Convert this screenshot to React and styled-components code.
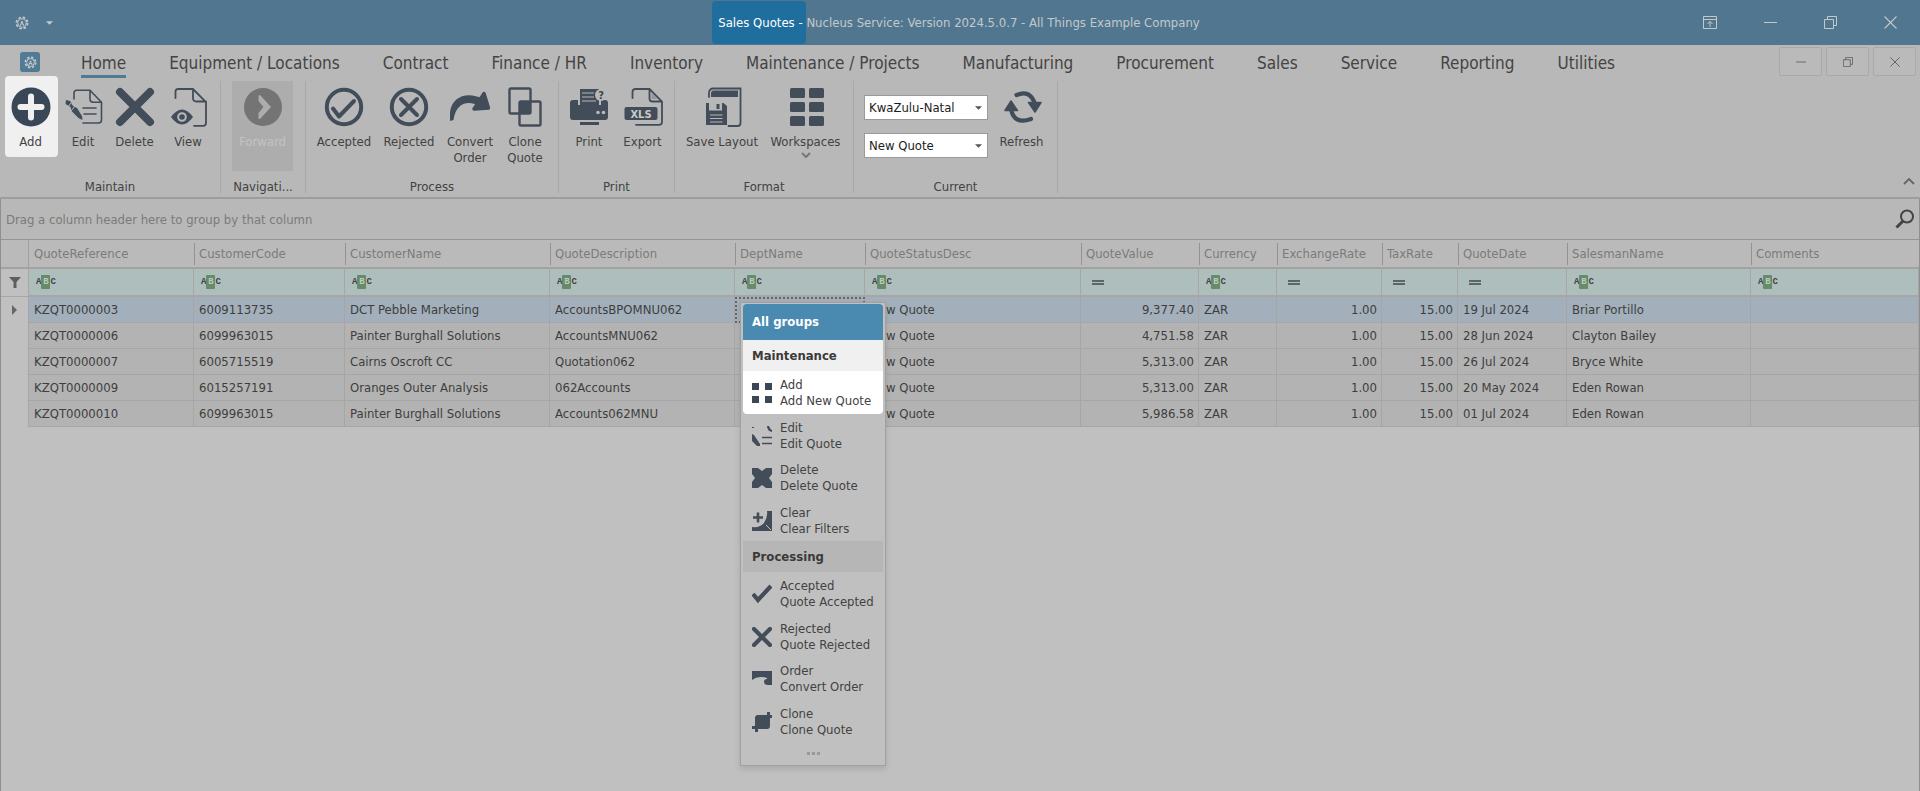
import React, { useState } from 'react';
import styled, { createGlobalStyle, css } from 'styled-components';

const ink = '#434d59';

/* ---------- data ---------- */

const tabs = [
  'Home', 'Equipment / Locations', 'Contract', 'Finance / HR', 'Inventory', 'Maintenance / Projects',
  'Manufacturing', 'Procurement', 'Sales', 'Service', 'Reporting', 'Utilities',
];

const columns = [
  { key: 'ref', label: 'QuoteReference', width: 165 },
  { key: 'code', label: 'CustomerCode', width: 151 },
  { key: 'name', label: 'CustomerName', width: 205 },
  { key: 'desc', label: 'QuoteDescription', width: 185 },
  { key: 'dept', label: 'DeptName', width: 130 },
  { key: 'status', label: 'QuoteStatusDesc', width: 216 },
  { key: 'value', label: 'QuoteValue', width: 118, numeric: true },
  { key: 'currency', label: 'Currency', width: 78 },
  { key: 'rate', label: 'ExchangeRate', width: 105, numeric: true },
  { key: 'tax', label: 'TaxRate', width: 76, numeric: true },
  { key: 'date', label: 'QuoteDate', width: 109, equals: true },
  { key: 'salesman', label: 'SalesmanName', width: 184 },
  { key: 'comments', label: 'Comments' },
];

const base = { dept: '', status: 'New Quote', currency: 'ZAR', rate: '1.00', tax: '15.00', comments: '' };

const quotes = [
  { ...base, ref: 'KZQT0000003', code: '6009113735', name: 'DCT Pebble Marketing', desc: 'AccountsBPOMNU062', value: '9,377.40', date: '19 Jul 2024', salesman: 'Briar Portillo' },
  { ...base, ref: 'KZQT0000006', code: '6099963015', name: 'Painter Burghall Solutions', desc: 'AccountsMNU062', value: '4,751.58', date: '28 Jun 2024', salesman: 'Clayton Bailey' },
  { ...base, ref: 'KZQT0000007', code: '6005715519', name: 'Cairns Oscroft CC', desc: 'Quotation062', value: '5,313.00', date: '26 Jul 2024', salesman: 'Bryce White' },
  { ...base, ref: 'KZQT0000009', code: '6015257191', name: 'Oranges Outer Analysis', desc: '062Accounts', value: '5,313.00', date: '20 May 2024', salesman: 'Eden Rowan' },
  { ...base, ref: 'KZQT0000010', code: '6099963015', name: 'Painter Burghall Solutions', desc: 'Accounts062MNU', value: '5,986.58', date: '01 Jul 2024', salesman: 'Eden Rowan' },
];

/* ---------- icons ---------- */

const Gear = ({ size }) => (
  <svg width={size} height={size} viewBox="0 0 16 16" fill="none" stroke="currentColor">
    <circle cx="8" cy="8" r="6.4" strokeWidth="2" strokeDasharray="2.9 2.13" />
    <circle cx="8" cy="8" r="4.8" strokeWidth="1.2" />
    <circle cx="8" cy="7" r="1.2" fill="currentColor" stroke="none" />
    <path d="M6 11c0-3 4-3 4 0" strokeWidth="1.3" />
  </svg>
);

const Caret = () => (
  <svg width="7" height="4" viewBox="0 0 8 4"><path d="M0 0h8L4 4z" fill="currentColor" /></svg>
);

const Minus = ({ size = 13 }) => (
  <svg width={size} height={size} viewBox="0 0 13 13"><path d="M0 6.5h13" stroke="currentColor" /></svg>
);

const Restore = ({ size = 13 }) => (
  <svg width={size} height={size} viewBox="0 0 13 13" fill="none" stroke="currentColor">
    <path d="M.5 3.5h9v9h-9zM3.5 3.5v-3h9v9h-3" />
  </svg>
);

const Close = ({ size = 13 }) => (
  <svg width={size} height={size} viewBox="0 0 13 13"><path d="M.5.5l12 12m0-12l-12 12" stroke="currentColor" strokeWidth="1.1" /></svg>
);

const RibbonMode = () => (
  <svg width="14" height="13" viewBox="0 0 14 13" fill="none" stroke="currentColor">
    <path d="M.5.5h13v12H.5zM.5 3.5h13M7 11V5.500M4.500 8L7 5.500 9.500 8" />
  </svg>
);

const big = {
  add: (
    <>
      <circle cx="20" cy="20" r="19.500" fill="#3a4757" />
      <path d="M20 9.500v21M9.500 20h21" stroke="#f0f0f0" strokeWidth="6" strokeLinecap="round" />
    </>
  ),
  edit: (
    <>
      <g fill="none" stroke={ink} strokeWidth="1.600" strokeLinecap="round">
        <path d="M11 12V6q0-2.800 2.800-2.800H27l11.500 12V33q0 3-3 3H20M27 3.500V12q0 3.200 3.200 3.200h8M20 21h13M21 27h12" />
      </g>
      <path d="M3 13l4 1 3 5 4 2 5 8 .5 4-4-2-7-7-1-4-5-3z" fill={ink} />
      <path d="M8 16l-3 4M12 19l-4 5" stroke="#b8b8b8" />
    </>
  ),
  remove: <path d="M5 5l30 30M35 5L5 35" stroke={ink} strokeWidth="8" strokeLinecap="round" />,
  view: (
    <>
      <g fill="none" stroke={ink} strokeWidth="1.800" strokeLinecap="round">
        <path d="M7.500 11V4.500Q7.500 2 10 2H25l13 13v21q0 2.800-3 2.800h-9M25 2v9q0 3.500 3.500 3.500H38" />
      </g>
      <path d="M3 30q11-15 22 0-11 15-22 0z" fill={ink} />
      <circle cx="14" cy="30" r="3.800" fill="none" stroke="#b8b8b8" strokeWidth="2" />
    </>
  ),
  forward: (
    <>
      <circle cx="20" cy="20" r="19" fill="#747474" />
      <path d="M16 8.500v5.500l5 6-5 6v5.500h1L27.500 20 17 8.500z" fill="#adadad" stroke="#adadad" strokeLinejoin="round" />
    </>
  ),
  accepted: (
    <g fill="none" stroke={ink} strokeLinecap="round" strokeLinejoin="round">
      <circle cx="20" cy="20" r="17.200" strokeWidth="4" />
      <path d="M9 21.500l6 8L30 14" strokeWidth="4" />
    </g>
  ),
  rejected: (
    <g fill="none" stroke={ink} strokeLinecap="round">
      <circle cx="20" cy="20" r="17.200" strokeWidth="4" />
      <path d="M12 12l16 16M28 12L12 28" strokeWidth="4" />
    </g>
  ),
  convert: (
    <>
      <path d="M0 34V25C2 9 18 4 33 12l-2 8C18 12 6 16 3.500 33z" fill={ink} />
      <path d="M34 6.500L38.500 21 24 22z" fill={ink} stroke={ink} strokeWidth="3.500" strokeLinejoin="round" />
    </>
  ),
  clone: (
    <>
      <g fill="none" stroke={ink} strokeWidth="2.400">
        <rect x="4.500" y="1.500" width="21" height="25" rx="1.500" />
        <rect x="14.500" y="14.500" width="21" height="24" rx="1.500" />
      </g>
      <rect x="14.500" y="14.500" width="11" height="12" fill={ink} />
    </>
  ),
  print: (
    <>
      <path d="M11 2h19v16H11z" fill={ink} />
      <path d="M13 6h12M13 10h12M13 14h14" stroke="#b8b8b8" strokeWidth="1.200" />
      <path d="M4 13h5v5h23v-5h4q3 0 3 3v14q0 3-3 3H4q-3 0-3-3V16q0-3 3-3z" fill={ink} />
      <path d="M11 35h19v3H11z" fill={ink} />
      <g fill="#b8b8b8">
        <circle cx="29" cy="25.500" r="1.800" />
        <circle cx="34.500" cy="25.500" r="1.800" />
        <circle cx="32" cy="8" r="6" />
      </g>
      <text x="32" y="12" textAnchor="middle" fontSize="11" fontWeight="700" fill="#444">?</text>
    </>
  ),
  xls: (
    <>
      <g fill="none" stroke={ink} strokeWidth="1.800" strokeLinecap="round">
        <path d="M9.500 11V5q0-3 3-3h14L39 14.500V35q0 2.800-3 2.800H13M26.500 2v9.500q0 3 3 3H39" />
      </g>
      <path d="M28.500 6v6h6z" fill={ink} opacity=".3" />
      <rect x="1.500" y="20" width="33" height="13" rx="2" fill={ink} />
      <text x="18" y="30.500" textAnchor="middle" fontSize="11" fontWeight="700" fill="#c8c8c8">XLS</text>
    </>
  ),
  save: (
    <>
      <path d="M7 10V6q0-4.500 4.500-4.500h27V36q0 3-3 3h-9" fill="none" stroke={ink} strokeWidth="1.800" strokeLinecap="round" />
      <path d="M11 3.500h25V10H9V6q0-2 2-2.500z" fill={ink} />
      <path d="M4 16h3v7.500h13V16h1.500l3.500 3v19H4zM14.500 17h3v5h-3z" fill={ink} />
      <path d="M8 28h12.500M8 31.500h12.500M8 35h12.500" stroke="#b8b8b8" strokeWidth="1.200" />
    </>
  ),
  workspaces: (
    <g fill={ink}>
      {[1, 15, 29].map(y => (
        <React.Fragment key={y}>
          <rect x="4" y={y} width="15" height="10" rx="1.500" />
          <rect x="23" y={y} width="15" height="10" rx="1.500" />
        </React.Fragment>
      ))}
    </g>
  ),
  refresh: (
    <>
      <g fill="none" stroke={ink} strokeWidth="4.200" strokeLinecap="round">
        <path d="M14.500 8Q28 2 33 17" />
        <path d="M29 32Q12 38 9 22" />
      </g>
      <path d="M26.500 15.500h12.500L33 25zM3 23.500h12.500L9 14z" fill={ink} stroke={ink} strokeWidth="1.500" strokeLinejoin="round" />
    </>
  ),
};

const small = {
  add: <path d="M0 0h7v7H0zM13 0h7v7h-7zM0 13h7v7H0zM13 13h7v7h-7z" fill="#3a4757" />,
  edit: (
    <>
      <path d="M10 11.500h10M10 17.500h10" stroke={ink} strokeWidth="1.500" />
      <path d="M0 8l2 1 6 9v2H5l-5-5zM15 0h2q1 3 3 4v2q-5-1-5-6zM0 1h2v1H0z" fill={ink} />
    </>
  ),
  remove: <path d="M0 0h6l4 3 4-3h6v6l-3 4 3 4v6h-6l-4-3-4 3H0v-6l3-4-3-4z" fill={ink} />,
  clear: (
    <>
      <path d="M1 6.500h10M6 1.500v10" stroke={ink} strokeWidth="2.600" />
      <path d="M15 0h5v20H0v-4q8 1 12-4 4-6 3-12z" fill={ink} />
      <path d="M14 14l5 5" stroke="#c0c0c0" strokeWidth="1" />
    </>
  ),
  accepted: <path d="M1 10l5 6L19 2" fill="none" stroke={ink} strokeWidth="4.200" />,
  rejected: <path d="M2 2l16 16M18 2L2 18" stroke={ink} strokeWidth="4.200" strokeLinecap="round" />,
  convert: <path d="M0 2h20v14h-4q-4 0-4-3.500 0-2.500 3-2.500V9Q6 6 0 11z" fill={ink} />,
  clone: <path d="M3 6q0-3 3-3h9V0h3v3h2v3h-2v8q0 3-3 3H6v3H3v-3H0v-3h3z" fill={ink} />,
};

const BigIcon = ({ name }) => <svg width="40" height="40" viewBox="0 0 40 40">{big[name]}</svg>;
const SmallIcon = ({ name }) => <svg width="20" height="20" viewBox="0 0 20 20">{small[name]}</svg>;

/* ---------- pieces ---------- */

const Tool = ({ icon, width, lit, disabled, dropdown, children }) => (
  <ToolButton type="button" $width={width} $lit={lit} disabled={disabled}>
    <BigIcon name={icon} />
    <span>{children}</span>
    {dropdown && (
      <svg width="10" height="6" viewBox="0 0 10 6"><path d="M1 1l4 4 4-4" fill="none" stroke="#777" strokeWidth="2" /></svg>
    )}
  </ToolButton>
);

const Group = ({ title, left, right, children }) => (
  <RibbonGroup aria-label={title}>
    <Tools $left={left} $right={right}>{children}</Tools>
    <Caption>{title}</Caption>
  </RibbonGroup>
);

const Combo = ({ label, value }) => (
  <ComboBox>
    <select aria-label={label} defaultValue={value}>
      <option>{value}</option>
    </select>
    <Caret />
  </ComboBox>
);

const Command = ({ icon, title, text, lit }) => (
  <MenuItem type="button" role="menuitem" $lit={lit}>
    <SmallIcon name={icon} />
    <span>{title}<br />{text}</span>
  </MenuItem>
);

const App = () => {
  const [tab, setTab] = useState('Home');
  const [selected, setSelected] = useState(0);

  return (
    <Window>
      <GlobalStyle />
      <TitleBar>
        <QuickAccess>
          <TitleButton type="button" $width={36} aria-label="Application"><Gear size={14} /></TitleButton>
          <TitleButton type="button" $width={18} aria-label="Customize quick access"><Caret /></TitleButton>
        </QuickAccess>
        <Title>
          <TitleMark>Sales Quotes -&nbsp;</TitleMark>
          Nucleus Service: Version 2024.5.0.7 - All Things Example Company
        </Title>
        <WindowButtons>
          <TitleButton type="button" $width={60} aria-label="Ribbon display"><RibbonMode /></TitleButton>
          <TitleButton type="button" $width={60} aria-label="Minimize"><Minus /></TitleButton>
          <TitleButton type="button" $width={60} aria-label="Restore"><Restore /></TitleButton>
          <TitleButton type="button" $width={60} aria-label="Close"><Close /></TitleButton>
        </WindowButtons>
      </TitleBar>

      <TabBar>
        <AppButton type="button" aria-label="File menu"><Gear size={13} /></AppButton>
        <Tabs>
          {tabs.map(name => (
            <Tab key={name} href="#" $active={name === tab} onClick={() => setTab(name)}>{name}</Tab>
          ))}
        </Tabs>
        <ChildButtons>
          <ChildButton type="button" aria-label="Minimize window"><Minus size={10} /></ChildButton>
          <ChildButton type="button" aria-label="Restore window"><Restore size={10} /></ChildButton>
          <ChildButton type="button" aria-label="Close window"><Close size={10} /></ChildButton>
        </ChildButtons>
      </TabBar>

      <Ribbon>
        <Group title="Maintain" left={5} right={5}>
          <Tool icon="add" width={53} lit>Add</Tool>
          <Tool icon="edit" width={50}>Edit</Tool>
          <Tool icon="remove" width={53}>Delete</Tool>
          <Tool icon="view" width={54}>View</Tool>
        </Group>
        <Group title="Navigati..." left={11} right={12}>
          <Tool icon="forward" width={61} disabled>Forward</Tool>
        </Group>
        <Group title="Process" left={5} right={7}>
          <Tool icon="accepted" width={66}>Accepted</Tool>
          <Tool icon="rejected" width={64}>Rejected</Tool>
          <Tool icon="convert" width={58}>Convert Order</Tool>
          <Tool icon="clone" width={52}>Clone Quote</Tool>
        </Group>
        <Group title="Print" left={3} right={5}>
          <Tool icon="print" width={54}>Print</Tool>
          <Tool icon="xls" width={53}>Export</Tool>
        </Group>
        <Group title="Format" left={4} right={7}>
          <Tool icon="save" width={86}>Save Layout</Tool>
          <Tool icon="workspaces" width={81} dropdown>Workspaces</Tool>
        </Group>
        <Group title="Current" left={10} right={2}>
          <Combos>
            <Combo label="Site" value="KwaZulu-Natal" />
            <Combo label="Status" value="New Quote" />
          </Combos>
          <Tool icon="refresh" width={67}>Refresh</Tool>
        </Group>
        <Collapse type="button" aria-label="Collapse ribbon">
          <svg width="12" height="8" viewBox="0 0 12 8"><path d="M1 7l5-5 5 5" fill="none" stroke="currentColor" strokeWidth="1.800" /></svg>
        </Collapse>
      </Ribbon>

      <GridPanel>
        <GroupBar>
          <span>Drag a column header here to group by that column</span>
          <SearchButton type="button" aria-label="Find">
            <svg width="20" height="20" viewBox="0 0 20 20" fill="none" stroke="currentColor">
              <circle cx="12" cy="7.500" r="6" strokeWidth="2" />
              <path d="M8 12l-6.500 6.500" strokeWidth="3" />
            </svg>
          </SearchButton>
        </GroupBar>

        <Table>
          <colgroup>
            <col width="28" />
            {columns.map(c => <col key={c.key} width={c.width} />)}
          </colgroup>
          <thead>
            <tr>
              <Corner aria-label="Row state" />
              {columns.map(c => <HeadCell key={c.key} scope="col"><span>{c.label}</span></HeadCell>)}
            </tr>
          </thead>
          <tbody>
            <tr>
              <FilterMark>
                <svg width="12" height="11" viewBox="0 0 12 11"><path d="M0 0h12L7.500 5v6h-3V5z" fill="currentColor" /></svg>
              </FilterMark>
              {columns.map(c => (
                <FilterCell key={c.key}>
                  <div>
                    {c.numeric || c.equals ? <EqualsSign aria-hidden="true" /> : <Abc aria-hidden="true">A<b>B</b>C</Abc>}
                    <input type="text" aria-label={`Filter ${c.label}`} />
                  </div>
                </FilterCell>
              ))}
            </tr>
            {quotes.map((q, i) => (
              <Row key={q.ref} $selected={i === selected} onClick={() => setSelected(i)}>
                <Indicator>
                  {i === selected && <svg width="5" height="10" viewBox="0 0 5 10"><path d="M0 0l5 5-5 5z" fill="currentColor" /></svg>}
                </Indicator>
                {columns.map(c => (
                  <Cell key={c.key} $right={c.numeric} $focused={i === selected && c.key === 'dept'}>{q[c.key]}</Cell>
                ))}
              </Row>
            ))}
          </tbody>
        </Table>

        <ContextMenu role="menu">
          <MenuHeader>All groups</MenuHeader>
          <MenuSection $lit>Maintenance</MenuSection>
          <MenuList>
            <Command icon="add" title="Add" text="Add New Quote" lit />
            <Command icon="edit" title="Edit" text="Edit Quote" />
            <Command icon="remove" title="Delete" text="Delete Quote" />
            <Command icon="clear" title="Clear" text="Clear Filters" />
          </MenuList>
          <MenuSection>Processing</MenuSection>
          <MenuList>
            <Command icon="accepted" title="Accepted" text="Quote Accepted" />
            <Command icon="rejected" title="Rejected" text="Quote Rejected" />
            <Command icon="convert" title="Order" text="Convert Order" />
            <Command icon="clone" title="Clone" text="Clone Quote" />
          </MenuList>
          <MoreButton type="button" aria-label="More"><i /><i /><i /></MoreButton>
        </ContextMenu>
      </GridPanel>
    </Window>
  );
};

/* ---------- styles ---------- */

const GlobalStyle = createGlobalStyle`
  * {
    box-sizing: border-box;
  }

  body {
    margin: 0;
    background: #c0c0c0;
  }

  body, button, input, select {
    font-family: "DejaVu Sans Condensed", "DejaVu Sans", sans-serif;
    font-size: 13px;
    color: #424242;
  }

  button {
    border: none;
    padding: 0;
    background: none;
  }

  svg {
    display: block;
    flex: none;
  }
`;

const Window = styled.div`
  display: flex;
  flex-direction: column;
  min-height: 100vh;
`;

const TitleBar = styled.header`
  display: grid;
  grid-template-columns: 1fr auto 1fr;
  height: 45px;
  background: #517790;
  color: #c3c8cb;
`;

const QuickAccess = styled.div`
  display: flex;
  padding-left: 4px;
`;

const TitleButton = styled.button`
  display: flex;
  align-items: center;
  justify-content: center;
  width: ${p => p.$width}px;
  color: #c3c8cb;
`;

const Title = styled.div`
  display: flex;
  align-items: center;
  padding-right: 8px;
  white-space: pre;
`;

const TitleMark = styled.span`
  display: flex;
  align-items: center;
  height: 43px;
  padding-left: 6px;
  border-radius: 4px;
  background: #206e9e;
  color: #fff;
`;

const WindowButtons = styled.div`
  display: flex;
  justify-content: flex-end;
`;

const TabBar = styled.div`
  display: flex;
  height: 33px;
  padding: 0 4px 0 20px;
  background: #b8b8b8;
`;

const AppButton = styled.button`
  display: flex;
  align-items: center;
  justify-content: center;
  width: 20px;
  height: 20px;
  margin: 7px 41px 0 0;
  border-radius: 3px;
  background: #517a94;
  color: #c8cdd0;
`;

const Tabs = styled.nav`
  display: flex;
  gap: 43px;
`;

const Tab = styled.a`
  padding-top: 6px;
  border-bottom: 3px solid ${p => (p.$active ? '#4f7a94' : 'transparent')};
  font-size: 17px;
  line-height: 24px;
  white-space: nowrap;
  text-decoration: none;
  color: #444;
`;

const ChildButtons = styled.div`
  display: flex;
  gap: 4px;
  margin-left: auto;
  padding-top: 2px;
`;

const ChildButton = styled.button`
  display: flex;
  align-items: center;
  justify-content: center;
  width: 43px;
  height: 29px;
  border: 1px solid #a9a9a9;
  border-radius: 2px;
  background: #bababa;
  color: #555;
`;

const Ribbon = styled.div`
  display: flex;
  padding: 3px 0 4px;
  border-bottom: 2px solid #9d9d9d;
  background: #b8b8b8;
`;

const RibbonGroup = styled.section`
  border-right: 1px solid #a8a8a8;
`;

const Tools = styled.div`
  display: flex;
  height: 90px;
  padding: 0 ${p => p.$right}px 0 ${p => p.$left}px;
`;

const Caption = styled.div`
  margin-top: 10px;
  line-height: 12px;
  text-align: center;
  white-space: nowrap;
`;

const ToolButton = styled.button`
  display: flex;
  flex-direction: column;
  align-items: center;
  width: ${p => p.$width}px;
  height: 90px;
  padding-top: 6px;
  line-height: 16px;

  span {
    margin: 7px 0 2px;
  }

  &:disabled {
    background: #adadad;
    color: #c3c3c3;
  }

  ${p => p.$lit && css`
    height: 81px;
    margin-top: -5px;
    padding: 11px 2px 0 0;
    border-radius: 4px;
    background: #f0f0f0;
  `}
`;

const Combos = styled.div`
  display: flex;
  flex-direction: column;
  gap: 13px;
  padding-top: 14px;
`;

const ComboBox = styled.div`
  position: relative;
  width: 124px;

  select {
    display: block;
    width: 100%;
    height: 25px;
    padding: 0 4px;
    border: 1px solid #9a9a9a;
    border-radius: 0;
    background: #fff;
    color: #1c1c1c;
    appearance: none;
  }

  svg {
    position: absolute;
    top: 11px;
    right: 6px;
    color: #555;
    pointer-events: none;
  }
`;

const Collapse = styled.button`
  display: flex;
  align-items: flex-end;
  margin-left: auto;
  padding: 0 5px 8px;
  color: #666;
`;

const GridPanel = styled.main`
  position: relative;
  flex: 1;
  border: solid #8f8f8f;
  border-width: 0 1px;
  background: #c0c0c0;
`;

const GroupBar = styled.div`
  display: flex;
  align-items: center;
  justify-content: space-between;
  height: 41px;
  padding: 0 4px 0 5px;
  border-bottom: 1px solid #949494;
  background: #b8b8b8;
  color: #7b7b7b;
`;

const SearchButton = styled.button`
  color: #444;
`;

const Table = styled.table`
  width: 100%;
  table-layout: fixed;
  border-spacing: 0;
  white-space: nowrap;

  td, th {
    overflow: hidden;
    padding: 0;
  }
`;

const Corner = styled.th`
  height: 29px;
  border-right: 1px solid #a0a0a0;
  border-bottom: 2px solid #a2a2a2;
  background: #bababa;
`;

const HeadCell = styled.th`
  border-bottom: 2px solid #a2a2a2;
  background: #bababa;
  font-weight: 400;
  text-align: left;
  color: #7b7b7b;

  span {
    display: block;
    padding-left: 5px;
    line-height: 22px;
  }

  & + & span {
    padding-left: 4px;
    border-left: 1px solid #939393;
  }
`;

const FilterMark = styled.td`
  height: 28px;
  border-right: 1px solid #a6a6a6;
  border-bottom: 1px solid #a6a6a6;
  color: #5e5e5e;

  svg {
    margin: 0 auto;
  }
`;

const FilterCell = styled.td`
  border-right: 1px solid #a6a6a6;
  border-bottom: 2px solid #a6a6a6;
  background: #adbebd;

  div {
    display: flex;
    align-items: center;
  }

  input {
    flex: 1;
    min-width: 0;
    height: 22px;
    padding: 0 4px;
    border: none;
    background: none;
  }
`;

const Abc = styled.span`
  display: flex;
  align-items: center;
  margin-left: 7px;
  font-family: "Liberation Mono", monospace;
  font-size: 9px;
  font-weight: 700;

  b {
    width: 9px;
    border-radius: 1px;
    background: #668a6a;
    line-height: 14px;
    text-align: center;
    color: #b9cdbb;
  }
`;

const EqualsSign = styled.span`
  width: 12px;
  height: 5px;
  margin-left: 11px;
  border: solid #5c6664;
  border-width: 2px 0;
`;

const Cell = styled.td`
  height: 26px;
  border-right: 1px solid #a6a6a6;
  border-bottom: 1px solid #a6a6a6;
  background: #b3b3b3;
  color: #3e3e3e;

  ${p => p.$focused && css`
    outline: 2px dotted #666;
    outline-offset: -2px;
  `}

  && {
    padding: 0 4px 0 5px;
    text-align: ${p => (p.$right ? 'right' : 'left')};
  }
`;

const Indicator = styled.td`
  border-right: 1px solid #a6a6a6;
  color: #666;

  svg {
    margin: 0 auto;
  }
`;

const Row = styled.tr`
  ${p => p.$selected && css`
    ${Cell} {
      background: #a3b0bb;
    }
  `}
`;

const ContextMenu = styled.div`
  position: absolute;
  top: 103px;
  left: 739px;
  width: 146px;
  padding: 1px 2px;
  border: 1px solid #a0a0a0;
  background: #c0c0c0;
  box-shadow: 0 3px 6px rgba(0, 0, 0, 0.12);
`;

const MenuHeader = styled.div`
  padding-left: 9px;
  border-radius: 4px 4px 0 0;
  background: #4a8ab0;
  line-height: 36px;
  font-weight: 700;
  color: #fff;
`;

const MenuSection = styled.div`
  padding-left: 9px;
  background: ${p => (p.$lit ? '#f0f0f0' : '#b6b6b6')};
  line-height: 31px;
  font-weight: 700;
  color: #3a3a3a;
`;

const MenuList = styled.div`
  display: grid;
  grid-auto-rows: 1fr;
  height: 170px;
`;

const MenuItem = styled.button`
  display: flex;
  align-items: center;
  gap: 8px;
  padding: 2px 0 0 9px;
  border-radius: 0 0 4px 4px;
  background: ${p => (p.$lit ? '#fff' : 'none')};
  line-height: 16px;
  text-align: left;
  white-space: nowrap;
`;

const MoreButton = styled.button`
  display: flex;
  align-items: center;
  justify-content: center;
  gap: 2px;
  width: 100%;
  height: 22px;

  i {
    width: 3px;
    height: 3px;
    background: #999;
  }
`;

export default App;
